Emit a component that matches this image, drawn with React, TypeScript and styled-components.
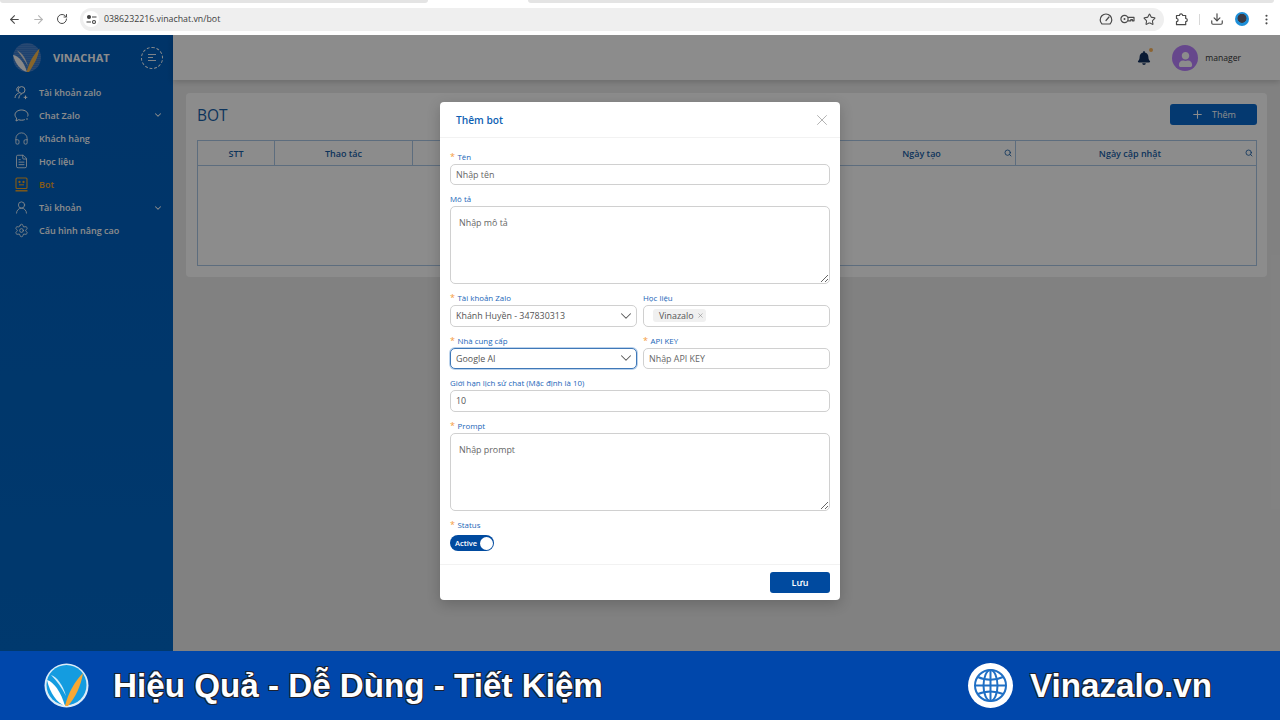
import React from "react";
import styled, { createGlobalStyle } from "styled-components";
import {
  ArrowLeft,
  ArrowRight,
  RotateCw,
  Star,
  Download,
  EllipsisVertical,
  Headphones,
  FileText,
  UserRound,
  Settings,
  ChevronDown,
  Plus,
  Search,
  X,
} from "lucide-react";
import { FaBell, FaUser } from "react-icons/fa";

const GlobalStyle = createGlobalStyle`
  html, body {
    margin: 0;
    padding: 0;
    height: 100%;
    overflow: hidden;
    background: #ececec;
  }
  * {
    box-sizing: border-box;
  }
  #root {
    height: 100%;
  }
`;

const Page = styled.div`
  width: 1280px;
  height: 720px;
  display: flex;
  flex-direction: column;
  font-family: "Open Sans", "Noto Sans", sans-serif;
`;

const TabStrip = styled.div`
  height: 3px;
  display: flex;
  background: #fff;
`;

const TabGap = styled.div<{ $w: number }>`
  width: ${(p) => p.$w}px;
  background: #e4e4e4;
  border-radius: 0 0 4px 4px;
`;

const TabActive = styled.div`
  width: 100px;
  background: #fff;
`;

const Toolbar = styled.div`
  height: 32px;
  display: flex;
  align-items: center;
  padding: 0 6px;
  background: #fff;
  color: #4a4a4a;
`;

const NavIcons = styled.div`
  display: flex;
  gap: 8px;
  width: 74px;
`;

const ToolIcon = styled.span<{ $dim?: boolean }>`
  width: 16px;
  height: 16px;
  display: inline-flex;
  align-items: center;
  justify-content: center;
  color: ${(p) => (p.$dim ? "#b5b5b5" : "#4a4a4a")};
`;

const UrlPill = styled.div`
  width: 1084px;
  height: 23px;
  display: flex;
  align-items: center;
  padding: 0 7px 0 3px;
  border-radius: 12px;
  background: #efefef;
`;

const SiteBadge = styled.span`
  width: 16px;
  height: 16px;
  margin-right: 5px;
  display: inline-flex;
  align-items: center;
  justify-content: center;
  border-radius: 50%;
  background: #fff;
  color: #444;
`;

const UrlText = styled.span`
  flex: 1;
  font-size: 8.8px;
  color: #3d3d3d;
  white-space: nowrap;
`;

const PillIcons = styled.div`
  display: flex;
  gap: 5.5px;
`;

const ToolbarRight = styled.div`
  flex: 1;
  display: flex;
  align-items: center;
  padding-left: 10px;
  gap: 8px;
`;

const ToolSep = styled.span`
  width: 1px;
  height: 11px;
  margin: 0 1px;
  background: #d8d8d8;
`;

const ProfilePic = styled.span`
  width: 14px;
  height: 14px;
  margin: 0 1px 0 2px;
  border-radius: 50%;
  background: radial-gradient(circle at 50% 45%, #3a3a44 0 40%, #1e8fd8 46%);
`;

const AppFrame = styled.div`
  position: relative;
  flex: 1;
  min-height: 0;
  display: flex;
  background: #ececec;
  overflow: hidden;
`;

const Sidebar = styled.aside`
  width: 173px;
  flex-shrink: 0;
  background: linear-gradient(to bottom, #005fbe, #0068c8);
  color: #fff;
`;

const Brand = styled.div`
  height: 45.5px;
  display: flex;
  align-items: center;
  padding: 0 10px 0 12px;
`;

const BrandName = styled.span`
  flex: 1;
  margin-left: 11px;
  font-size: 11px;
  font-weight: 700;
  color: #fff;
`;

const MenuToggle = styled.span`
  width: 22px;
  height: 22px;
  display: flex;
  align-items: center;
  justify-content: center;
  border: 1px dashed #fff;
  border-radius: 50%;
`;

const NavList = styled.nav`
  display: flex;
  flex-direction: column;
`;

const NavItem = styled.div<{ $active?: boolean }>`
  height: 23.1px;
  display: flex;
  align-items: center;
  padding: 0 10px 0 14px;
  gap: 10px;
  font-size: 9px;
  font-weight: 600;
  color: ${(p) => (p.$active ? "#f5a623" : "#fff")};
`;

const NavLabel = styled.span`
  flex: 1;
  white-space: nowrap;
`;

const Main = styled.main`
  flex: 1;
  min-width: 0;
  display: flex;
  flex-direction: column;
`;

const TopBar = styled.header`
  height: 45px;
  display: flex;
  align-items: center;
  justify-content: flex-end;
  padding-right: 39px;
  background: #fff;
  box-shadow: 0 2px 6px rgba(0, 0, 0, 0.18);
`;

const BellWrap = styled.span`
  position: relative;
  display: inline-flex;
  margin-right: 21px;
  color: #12305f;
`;

const BellDot = styled.span`
  position: absolute;
  top: -3px;
  right: -2px;
  width: 4px;
  height: 4px;
  border-radius: 50%;
  background: #ffb65c;
`;

const Avatar = styled.span`
  width: 26px;
  height: 26px;
  display: flex;
  align-items: flex-end;
  justify-content: center;
  padding-bottom: 4px;
  border-radius: 50%;
  background: #bb82ff;
  color: #fff;
  overflow: hidden;
`;

const UserName = styled.span`
  margin-left: 7px;
  font-size: 8.6px;
  color: #333;
`;

const Card = styled.section`
  margin: 13px 13px 0;
  padding: 11px 10px 11px 11px;
  height: 184px;
  border-radius: 4px;
  background: #fff;
`;

const CardHead = styled.div`
  height: 36px;
  display: flex;
  align-items: flex-start;
  justify-content: space-between;
`;

const CardTitle = styled.h1`
  margin: 0;
  font-size: 15.5px;
  line-height: 22px;
  font-weight: 500;
  color: #185fa8;
`;

const AddButton = styled.button`
  width: 87px;
  height: 21px;
  display: flex;
  align-items: center;
  justify-content: center;
  gap: 8px;
  border: 0;
  border-radius: 3px;
  background: #0868cc;
  color: #fff;
  font-family: inherit;
  font-size: 9px;
  font-weight: 500;
`;

const Table = styled.div`
  height: 126px;
  border: 1px solid #a9c6e6;
  display: flex;
  flex-direction: column;
`;

const HeadRow = styled.div`
  height: 25px;
  display: grid;
  grid-template-columns: 77px 138px 208px 207px 188px 1fr;
  border-bottom: 1px solid #a9c6e6;
`;

const HeadCell = styled.div`
  position: relative;
  display: flex;
  align-items: center;
  justify-content: center;
  border-right: 1px solid #a9c6e6;
  font-size: 9px;
  font-weight: 600;
  color: #185fa8;
  &:last-child {
    border-right: 0;
    padding-right: 12px;
  }
`;

const CellSearch = styled.span`
  position: absolute;
  top: 8px;
  right: 3px;
  display: inline-flex;
  color: #185fa8;
`;

const Overlay = styled.div`
  position: absolute;
  inset: 0;
  display: flex;
  justify-content: center;
  padding-top: 67px;
  background: rgba(0, 0, 0, 0.45);
`;

const Modal = styled.div`
  width: 400px;
  height: 498px;
  display: flex;
  flex-direction: column;
  border-radius: 4px;
  background: #fff;
  box-shadow: 0 4px 14px rgba(0, 0, 0, 0.2);
`;

const ModalHead = styled.div`
  height: 36px;
  flex-shrink: 0;
  display: flex;
  align-items: center;
  justify-content: space-between;
  padding: 0 9px 0 16px;
  border-bottom: 1px solid #f2f2f2;
`;

const ModalTitle = styled.h2`
  margin: 0;
  font-size: 10.2px;
  font-weight: 600;
  color: #0f5fb3;
`;

const CloseButton = styled.span`
  display: inline-flex;
  color: #9a9a9a;
`;

const ModalBody = styled.form`
  flex: 1;
  display: flex;
  flex-direction: column;
  gap: 8px;
  padding: 12.5px 10px 0;
`;

const TwoCols = styled.div`
  display: grid;
  grid-template-columns: 187px 187px;
  gap: 6px;
`;

const Field = styled.div`
  display: flex;
  flex-direction: column;
  min-width: 0;
`;

const Label = styled.label<{ $required?: boolean }>`
  height: 13px;
  line-height: 12px;
  font-size: 7.9px;
  font-weight: 500;
  color: #1a66b8;
  white-space: nowrap;
  &::before {
    content: ${(p) => (p.$required ? '"*"' : "none")};
    margin-right: 2.5px;
    font-size: 9px;
    color: #f59a3c;
  }
`;

const TextInput = styled.input`
  width: 100%;
  height: 21.5px;
  padding: 0 5px;
  border: 1px solid #d0d0d0;
  border-radius: 5px;
  outline: none;
  background: #fff;
  font-family: inherit;
  font-size: 8.9px;
  color: #555;
  &::placeholder {
    color: #666;
    opacity: 1;
  }
`;

const TextArea = styled.textarea`
  width: 100%;
  height: 78px;
  display: block;
  padding: 9px 8px;
  border: 1px solid #d0d0d0;
  border-radius: 5px;
  outline: none;
  background: #fff;
  font-family: inherit;
  font-size: 8.9px;
  line-height: 13px;
  &::placeholder {
    color: #666;
    opacity: 1;
  }
`;

const SelectBox = styled.div<{ $focused?: boolean }>`
  height: 21.5px;
  display: flex;
  align-items: center;
  justify-content: space-between;
  padding: 0 1.5px 0 5px;
  border: 1px solid ${(p) => (p.$focused ? "#3f78b8" : "#d0d0d0")};
  border-radius: 5px;
  background: #fff;
  font-size: 8.9px;
  color: #555;
  box-shadow: ${(p) => (p.$focused ? "0 0 0 1px #bcd3ec" : "none")};
`;

const MultiBox = styled.div`
  height: 21.5px;
  display: flex;
  align-items: center;
  padding: 0 9px;
  border: 1px solid #d0d0d0;
  border-radius: 5px;
  background: #fff;
`;

const Tag = styled.span`
  height: 13px;
  display: inline-flex;
  align-items: center;
  gap: 3px;
  padding: 0 2px 0 6px;
  border-radius: 3px;
  background: #f0f0f0;
  font-size: 8.9px;
  color: #555;
`;

const TagClose = styled.span`
  display: inline-flex;
  color: #8c8c8c;
`;

const Switch = styled.div`
  width: 44px;
  height: 16px;
  margin-top: 3.5px;
  display: flex;
  align-items: center;
  justify-content: space-between;
  padding: 0 1.5px 0 5px;
  border-radius: 8px;
  background: #004a9f;
  color: #fff;
  font-size: 7.5px;
  font-weight: 600;
`;

const Knob = styled.span`
  width: 13px;
  height: 13px;
  border-radius: 50%;
  background: #fff;
`;

const ModalFoot = styled.div`
  height: 36px;
  flex-shrink: 0;
  display: flex;
  align-items: center;
  justify-content: flex-end;
  padding: 0 10px;
  border-top: 1px solid #f2f2f2;
`;

const SaveButton = styled.button`
  width: 60px;
  height: 21px;
  border: 0;
  border-radius: 3px;
  background: #004a9f;
  color: #fff;
  font-family: inherit;
  font-size: 9px;
  font-weight: 600;
`;

const Banner = styled.footer`
  height: 69px;
  flex-shrink: 0;
  display: flex;
  align-items: center;
  justify-content: space-between;
  padding: 0 68px 0 44px;
  background: #0047ab;
`;

const BannerGroup = styled.div<{ $gap: number }>`
  display: flex;
  align-items: center;
  gap: ${(p) => p.$gap}px;
`;

const BannerText = styled.span`
  font-family: "Liberation Sans", Arial, sans-serif;
  font-size: 33.2px;
  font-weight: 700;
  color: #fff;
  white-space: nowrap;
  text-shadow: 1px 1px 0 #1c2230, -1px -1px 0 #1c2230, 1px -1px 0 #1c2230, -1px 1px 0 #1c2230;
`;

const GlobeBadge = styled.span`
  width: 45px;
  height: 45px;
  display: flex;
  align-items: center;
  justify-content: center;
  border-radius: 50%;
  background: #fff;
  color: #1f6fc4;
`;

function TuneIcon() {
  return (
    <svg width="11" height="11" viewBox="0 0 11 11" fill="none" stroke="currentColor" strokeWidth="1.1">
      <circle cx="3" cy="3" r="1.5" fill="currentColor" />
      <path d="M6 3h4.500M.5 8H5" />
      <circle cx="8" cy="8" r="1.5" />
    </svg>
  );
}

function DialIcon() {
  return (
    <svg width="14" height="14" viewBox="0 0 14 14" fill="none" stroke="currentColor" strokeWidth="1.2">
      <path d="M3 12h8a5.800 5.800 0 1 0-8 0z" strokeLinejoin="round" />
      <path d="M7 8.500l3-3.500" strokeLinecap="round" />
    </svg>
  );
}

function PasswordKeyIcon() {
  return (
    <svg width="15" height="14" viewBox="0 0 15 14" fill="none" stroke="currentColor" strokeWidth="1.2">
      <circle cx="4.500" cy="7" r="3.600" />
      <circle cx="4.500" cy="7" r="1" fill="currentColor" stroke="none" />
      <path d="M8 5.400h6v3.400h-1.600V7.600h-1.600v1.200H8" strokeLinejoin="round" />
    </svg>
  );
}

function ExtensionIcon() {
  return (
    <svg width="14" height="14" viewBox="0 0 14 14" fill="none" stroke="currentColor" strokeWidth="1.2" strokeLinejoin="round">
      <path d="M1.500 3.500h3a1.600 1.600 0 0 1 3.200 0h3v3a1.600 1.600 0 0 1 0 3.200v3H1.500v-3a1.600 1.600 0 0 0 0-3.200z" />
    </svg>
  );
}

function ToggleLines() {
  return (
    <svg width="10" height="9" viewBox="0 0 10 9" fill="none" stroke="currentColor" strokeWidth="0.9">
      <path d="M1 1.500h8M1 4.500h5M1 7.500h8" />
    </svg>
  );
}

function ZaloUserIcon() {
  return (
    <svg width="15" height="15" viewBox="0 0 15 15" fill="none" stroke="currentColor" strokeWidth="1">
      <circle cx="7.600" cy="5" r="3.400" />
      <path d="M5 1.600C2.800 2 2 4.600 3.400 6.400" />
      <path d="M1 13c.2-2.600 1.600-4.200 3.600-4.800M4.800 13.400c.2-2.400 1.400-4 3-4.400" />
      <path d="M11.500 10.500v3.600M9.700 12.300h3.600" />
    </svg>
  );
}

function ChatIcon() {
  return (
    <svg width="15" height="15" viewBox="0 0 15 15" fill="none" stroke="currentColor" strokeWidth="1">
      <path d="M10.800 11.600c-1 .4-2.100.6-3.300.6-1 0-2-.2-2.800-.5L2 13l.6-2.900C1.600 9.200 1 8 1 6.800 1 4.100 3.900 2 7.500 2S14 4.100 14 6.800c0 .6-.1 1.200-.4 1.700" />
      <circle cx="13" cy="11" r="0.8" fill="currentColor" stroke="none" />
    </svg>
  );
}

function BotIcon() {
  return (
    <svg width="15" height="15" viewBox="0 0 14 15" fill="none" stroke="currentColor" strokeWidth="1.1">
      <rect x="1.500" y="1" width="11" height="10.500" rx="1" />
      <circle cx="5" cy="5" r="0.6" fill="currentColor" />
      <circle cx="9" cy="5" r="0.6" fill="currentColor" />
      <path d="M4.500 7.800h5" />
      <path d="M1 13.800h12" strokeWidth="1.4" />
    </svg>
  );
}

function GlobeIcon() {
  return (
    <svg width="35" height="35" viewBox="0 0 35 35" fill="none" stroke="currentColor" strokeWidth="2">
      <circle cx="17.500" cy="17.500" r="15.500" />
      <ellipse cx="17.500" cy="17.500" rx="7" ry="15.500" />
      <path d="M17.500 2v31M2 17.500h31" />
      <path d="M5 9c7 3.500 18 3.500 25 0M5 26c7-3.500 18-3.500 25 0" />
    </svg>
  );
}

function SidebarLogo() {
  return (
    <svg width="30" height="30" viewBox="0 0 30 30">
      <defs>
        <pattern id="dots" width="2" height="2" patternUnits="userSpaceOnUse">
          <rect width="2" height="2" fill="#0d5cc0" />
          <circle cx="1" cy="1" r="0.55" fill="#ffffff" />
        </pattern>
      </defs>
      <ellipse cx="15" cy="14.500" rx="14" ry="14.500" fill="url(#dots)" />
      <path d="M1 12c6 1 11 7 14 17C9 28 3 20 1 12z" fill="#f7f7f7" />
      <path d="M5 7.500c5 2 9 8 11 16-3-6-7-11-11-16z" fill="#dcdcdc" />
      <path d="M14.500 29c2.500-9 6.500-17 13-23.500-1.500 9-6 17-10.500 23.500z" fill="#f5b84f" />
    </svg>
  );
}

function BannerLogo() {
  return (
    <svg width="45" height="45" viewBox="0 0 45 45">
      <ellipse cx="22.500" cy="22.500" rx="22" ry="22" fill="#dcecf8" />
      <ellipse cx="22.500" cy="22" rx="20" ry="20" fill="#149ce0" />
      <path d="M3 17c7 2 14 12 18 26C13 40 6 30 3 17z" fill="#fff" />
      <path d="M7 12c6 2 12 10 15 21-4-8-9-15-15-21z" fill="#d4eefb" />
      <path d="M21 43c3-13 10-25 18-33-2 13-8 25-15 33z" fill="#f7a833" />
    </svg>
  );
}

const menu = [
  { label: "Tài khoản zalo", icon: <ZaloUserIcon /> },
  { label: "Chat Zalo", icon: <ChatIcon />, arrow: true },
  { label: "Khách hàng", icon: <Headphones size={15} strokeWidth={1.3} /> },
  { label: "Học liệu", icon: <FileText size={15} strokeWidth={1.3} /> },
  { label: "Bot", icon: <BotIcon />, active: true },
  { label: "Tài khoản", icon: <UserRound size={15} strokeWidth={1.3} />, arrow: true },
  { label: "Cấu hình nâng cao", icon: <Settings size={15} strokeWidth={1.3} /> },
];

const columns = ["STT", "Thao tác", "", "", "Ngày tạo", "Ngày cập nhật"];

export default function App() {
  return (
    <Page>
      <GlobalStyle />
      <TabStrip>
        <TabGap $w={428} />
        <TabActive />
        <TabGap $w={746} />
      </TabStrip>
      <Toolbar>
        <NavIcons>
          <ToolIcon><ArrowLeft size={13} /></ToolIcon>
          <ToolIcon $dim><ArrowRight size={13} /></ToolIcon>
          <ToolIcon><RotateCw size={12} /></ToolIcon>
        </NavIcons>
        <UrlPill>
          <SiteBadge><TuneIcon /></SiteBadge>
          <UrlText>0386232216.vinachat.vn/bot</UrlText>
          <PillIcons>
            <ToolIcon><DialIcon /></ToolIcon>
            <ToolIcon><PasswordKeyIcon /></ToolIcon>
            <ToolIcon><Star size={13} /></ToolIcon>
          </PillIcons>
        </UrlPill>
        <ToolbarRight>
          <ToolIcon><ExtensionIcon /></ToolIcon>
          <ToolSep />
          <ToolIcon><Download size={14} /></ToolIcon>
          <ProfilePic />
          <ToolIcon><EllipsisVertical size={13} /></ToolIcon>
        </ToolbarRight>
      </Toolbar>
      <AppFrame>
        <Sidebar>
          <Brand>
            <SidebarLogo />
            <BrandName>VINACHAT</BrandName>
            <MenuToggle><ToggleLines /></MenuToggle>
          </Brand>
          <NavList>
            {menu.map((item) => (
              <NavItem key={item.label} $active={item.active}>
                {item.icon}
                <NavLabel>{item.label}</NavLabel>
                {item.arrow && <ChevronDown size={10} strokeWidth={2.5} />}
              </NavItem>
            ))}
          </NavList>
        </Sidebar>
        <Main>
          <TopBar>
            <BellWrap>
              <FaBell size={14} />
              <BellDot />
            </BellWrap>
            <Avatar><FaUser size={15} /></Avatar>
            <UserName>manager</UserName>
          </TopBar>
          <Card>
            <CardHead>
              <CardTitle>BOT</CardTitle>
              <AddButton><Plus size={13} />Thêm</AddButton>
            </CardHead>
            <Table>
              <HeadRow>
                {columns.map((col, i) => (
                  <HeadCell key={i}>
                    {col}
                    {i > 3 && (
                      <CellSearch><Search size={8} strokeWidth={2.5} /></CellSearch>
                    )}
                  </HeadCell>
                ))}
              </HeadRow>
            </Table>
          </Card>
        </Main>
        <Overlay>
          <Modal>
            <ModalHead>
              <ModalTitle>Thêm bot</ModalTitle>
              <CloseButton><X size={18} strokeWidth={1} /></CloseButton>
            </ModalHead>
            <ModalBody>
              <Field>
                <Label $required>Tên</Label>
                <TextInput placeholder="Nhập tên" />
              </Field>
              <Field>
                <Label>Mô tả</Label>
                <TextArea placeholder="Nhập mô tả" />
              </Field>
              <TwoCols>
                <Field>
                  <Label $required>Tài khoản Zalo</Label>
                  <SelectBox>
                    Khánh Huyền - 347830313
                    <ChevronDown size={18} strokeWidth={1.4} />
                  </SelectBox>
                </Field>
                <Field>
                  <Label>Học liệu</Label>
                  <MultiBox>
                    <Tag>
                      Vinazalo
                      <TagClose><X size={7} /></TagClose>
                    </Tag>
                  </MultiBox>
                </Field>
              </TwoCols>
              <TwoCols>
                <Field>
                  <Label $required>Nhà cung cấp</Label>
                  <SelectBox $focused>
                    Google AI
                    <ChevronDown size={18} strokeWidth={1.4} />
                  </SelectBox>
                </Field>
                <Field>
                  <Label $required>API KEY</Label>
                  <TextInput placeholder="Nhập API KEY" />
                </Field>
              </TwoCols>
              <Field>
                <Label>Giới hạn lịch sử chat (Mặc định là 10)</Label>
                <TextInput defaultValue="10" />
              </Field>
              <Field>
                <Label $required>Prompt</Label>
                <TextArea placeholder="Nhập prompt" />
              </Field>
              <Field>
                <Label $required>Status</Label>
                <Switch>
                  Active
                  <Knob />
                </Switch>
              </Field>
            </ModalBody>
            <ModalFoot>
              <SaveButton type="button">Lưu</SaveButton>
            </ModalFoot>
          </Modal>
        </Overlay>
      </AppFrame>
      <Banner>
        <BannerGroup $gap={24}>
          <BannerLogo />
          <BannerText>Hiệu Quả - Dễ Dùng - Tiết Kiệm</BannerText>
        </BannerGroup>
        <BannerGroup $gap={17}>
          <GlobeBadge><GlobeIcon /></GlobeBadge>
          <BannerText>Vinazalo.vn</BannerText>
        </BannerGroup>
      </Banner>
    </Page>
  );
}
